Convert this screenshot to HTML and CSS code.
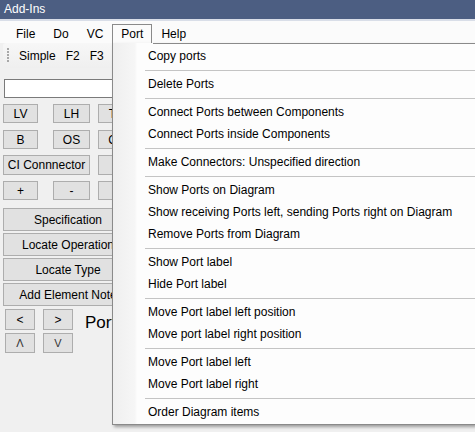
FILE: index.html
```html
<!DOCTYPE html>
<html>
<head>
<meta charset="utf-8">
<link rel="stylesheet" href="styles.css">
</head>
<body>
<div class="titlebar">Add-Ins</div>
<div class="menubar">
  <span class="mi">File</span>
  <span class="mi">Do</span>
  <span class="mi">VC</span>
  <span class="mi open">Port</span>
  <span class="mi">Help</span>
</div>
<div class="toolbar">
  <span class="grip"></span>
  <span class="tb">Simple</span>
  <span class="tb">F2</span>
  <span class="tb">F3</span>
</div>
<div class="form">
  <div class="textbox"></div>
  <div class="row r1">
    <div class="btn c1">LV</div>
    <div class="btn c2">LH</div>
    <div class="btn c3">TV</div>
  </div>
  <div class="row r2">
    <div class="btn c1">B</div>
    <div class="btn c2">OS</div>
    <div class="btn c3">CP</div>
  </div>
  <div class="row r3">
    <div class="btn cwide">CI Connnector</div>
    <div class="btn c3"></div>
  </div>
  <div class="row r4">
    <div class="btn c1">+</div>
    <div class="btn c2">-</div>
    <div class="btn c3"></div>
  </div>
  <div class="btn wide first">Specification</div>
  <div class="btn wide">Locate Operation</div>
  <div class="btn wide">Locate Type</div>
  <div class="btn wide">Add Element Note</div>
  <div class="nav">
    <div class="navgrid">
      <div class="btn nb">&lt;</div>
      <div class="btn nb">&gt;</div>
      <div class="btn nb small">&Lambda;</div>
      <div class="btn nb small">V</div>
    </div>
    <div class="navlabel">Port</div>
  </div>
</div>
<div class="dropdown">
  <div class="item">Copy ports</div>
  <div class="sep"></div>
  <div class="item">Delete Ports</div>
  <div class="sep"></div>
  <div class="item">Connect Ports between Components</div>
  <div class="item">Connect Ports inside Components</div>
  <div class="sep"></div>
  <div class="item">Make Connectors: Unspecified direction</div>
  <div class="sep"></div>
  <div class="item">Show Ports on Diagram</div>
  <div class="item">Show receiving Ports left, sending Ports right on Diagram</div>
  <div class="item">Remove Ports from Diagram</div>
  <div class="sep"></div>
  <div class="item">Show Port label</div>
  <div class="item">Hide Port label</div>
  <div class="sep"></div>
  <div class="item">Move Port label left position</div>
  <div class="item">Move port label right position</div>
  <div class="sep"></div>
  <div class="item">Move Port label left</div>
  <div class="item">Move Port label right</div>
  <div class="sep"></div>
  <div class="item">Order Diagram items</div>
</div>
</body>
</html>
```
FILE: styles.css
```css
html, body {
  margin: 0;
  padding: 0;
}
body {
  width: 475px;
  height: 432px;
  overflow: hidden;
  position: relative;
  background: #f0f0f0;
  font-family: "Liberation Sans", Arial, sans-serif;
  font-size: 12px;
  color: #000;
}
.titlebar {
  height: 19px;
  line-height: 19px;
  padding-left: 4px;
  background: #4c5e82;
  color: #fff;
  border-bottom: 2px solid #d9dee8;
}
.menubar {
  height: 22px;
  background: #fbfbfb;
  display: flex;
  align-items: flex-end;
  padding-left: 7px;
}
.mi {
  height: 18px;
  line-height: 18px;
  padding: 0 8px;
  border: 1px solid transparent;
  border-bottom: 0;
}
.mi.open {
  border-color: #8a8a8a;
}
.toolbar {
  height: 25px;
  margin-left: 3px;
  padding-left: 4px;
  display: flex;
  align-items: center;
  background: linear-gradient(#f7f7f7, #efefef);
  border-radius: 3px 0 0 3px;
}
.grip {
  width: 2px;
  height: 15px;
  margin-right: 5px;
  background: repeating-linear-gradient(to bottom, #a8a8a8 0 2px, transparent 2px 3px);
}
.tb {
  padding: 0 5px;
}
.form {
  display: flex;
  flex-direction: column;
  align-items: flex-start;
  padding-left: 3px;
}
.textbox {
  margin-top: 11px;
  margin-left: 1px;
  width: 300px;
  height: 17px;
  background: #fff;
  border: 1px solid #7a7a7a;
}
.row {
  display: flex;
}
.r1 { margin-top: 6px; height: 19px; }
.r2 { margin-top: 7px; height: 19px; }
.r3 { margin-top: 6px; height: 20px; }
.r4 { margin-top: 6px; height: 19px; }
.btn {
  box-sizing: border-box;
  background: #e1e1e1;
  border: 1px solid #adadad;
  display: flex;
  align-items: center;
  justify-content: center;
  white-space: nowrap;
  overflow: hidden;
}
.c1 { width: 35px; }
.c2 { width: 37px; margin-left: 15px; }
.c3 { width: 37px; margin-left: 8px; }
.cwide { width: 87px; }
.wide {
  width: 130px;
  height: 23px;
  margin-top: 2px;
}
.wide.first { margin-top: 8px; }
.nav {
  display: flex;
  margin-top: 3px;
  margin-left: 2px;
}
.navgrid {
  display: grid;
  grid-template-columns: 30px 30px;
  grid-template-rows: 21px 20px;
  column-gap: 8px;
  row-gap: 3px;
}
.nb {
  font-size: 12px;
}
.nb.small {
  font-size: 11px;
  color: #333;
}
.navlabel {
  margin-left: 12px;
  margin-top: 4px;
  font-size: 17px;
  line-height: 20px;
}
.dropdown {
  position: absolute;
  left: 112px;
  right: 0;
  top: 43px;
  padding: 2px 0 1px;
  background: linear-gradient(to right, #efefef 0, #f6f6f6 22px, #fdfdfd 24px, #fdfdfd 100%);
  border-left: 1px solid #8a8a8a;
  border-bottom: 1px solid #8a8a8a;
  box-shadow: 2px 2px 3px rgba(0, 0, 0, 0.35);
}
.dropdown::before {
  content: "";
  position: absolute;
  top: 0;
  left: 40px;
  right: 0;
  height: 1px;
  background: #8a8a8a;
}
.item {
  height: 22px;
  line-height: 22px;
  padding-left: 35px;
  white-space: nowrap;
}
.sep {
  height: 1px;
  margin: 3px 0 2px 32px;
  background: #c4c4c4;
}
```
